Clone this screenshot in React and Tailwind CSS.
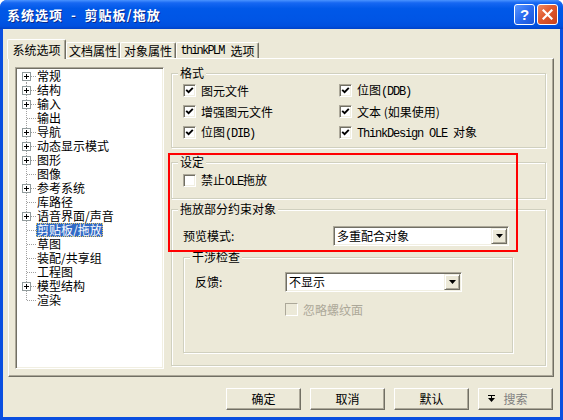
import React from 'react';

const M = ({ children }) => (
  <span className="font-['Liberation_Mono',monospace] tracking-[-1.2px] whitespace-pre">{children}</span>
);

function Check({ checked, disabled }) {
  return (
    <span
      className={
        disabled
          ? 'w-[13px] h-[13px] shrink-0 border border-t-[#aca899] border-l-[#aca899] border-b-white border-r-white bg-[#ece9d8]'
          : 'w-[13px] h-[13px] shrink-0 border border-t-[#aca899] border-l-[#aca899] border-b-white border-r-white bg-white shadow-[inset_1px_1px_0_#716f64,inset_-1px_-1px_0_#f1efe2] flex items-center justify-center'
      }
    >
      {checked && (
        <svg width="9" height="9" viewBox="0 0 9 9">
          <path d="M1.2 3.8 L3.6 6.2 L7.8 1.8" stroke="#000" strokeWidth="1.9" fill="none" />
        </svg>
      )}
    </span>
  );
}

function CheckRow({ checked, disabled, children }) {
  return (
    <div className="h-[21px] flex items-center gap-[5px]">
      <Check checked={checked} disabled={disabled} />
      <span className={disabled ? 'leading-[14px] text-[#aca899]' : 'leading-[14px]'}>{children}</span>
    </div>
  );
}

function Group({ label, className, children }) {
  return (
    <div className={`relative border border-[#d0d0bf] shadow-[inset_1px_1px_0_#fff,1px_1px_0_#fff] ${className}`}>
      <span className="absolute -top-[8px] left-[6px] px-[2px] bg-[#ece9d8] leading-[14px] whitespace-nowrap">
        {label}
      </span>
      {children}
    </div>
  );
}

function Combo({ value, className }) {
  return (
    <div
      className={`h-[20px] p-[1px] bg-white border border-t-[#aca899] border-l-[#aca899] border-b-white border-r-white shadow-[inset_1px_1px_0_#716f64,inset_-1px_-1px_0_#f1efe2] flex items-center ${className}`}
    >
      <span className="flex-1 pl-[2px] leading-[14px]">{value}</span>
      <span className="w-[16px] h-[16px] bg-[#ece9d8] border border-t-[#f1efe2] border-l-[#f1efe2] border-r-[#716f64] border-b-[#716f64] shadow-[inset_1px_1px_0_#fff,inset_-1px_-1px_0_#aca899] flex items-center justify-center">
        <svg width="7" height="4" viewBox="0 0 7 4">
          <path d="M0 0 H7 L3.5 4 Z" fill="#000" />
        </svg>
      </span>
    </div>
  );
}

const tree = [
  ['常规', true],
  ['结构', true],
  ['输入', true],
  ['输出', false],
  ['导航', true],
  ['动态显示模式', true],
  ['图形', true],
  ['图像', false],
  ['参考系统', true],
  ['库路径', false],
  ['语音界面/声音', true],
  ['剪贴板/拖放', false, true],
  ['草图', false],
  ['装配/共享组', false],
  ['工程图', false],
  ['模型结构', true],
  ['渲染', false],
];

function TreeGlyph({ box, first, last }) {
  return (
    <svg width="19" height="14" className="shrink-0" shapeRendering="crispEdges">
      <line x1="9.5" y1={first ? 7 : 0} x2="9.5" y2={last ? 8 : 14} stroke="#a0a0a0" strokeDasharray="1 1" />
      <line x1={box ? 14 : 10} y1="7.5" x2="19" y2="7.5" stroke="#a0a0a0" strokeDasharray="1 1" />
      {box && (
        <>
          <rect x="5.5" y="3.5" width="8" height="8" fill="#fff" stroke="#919b9c" />
          <line x1="7" y1="7.5" x2="12" y2="7.5" stroke="#000" />
          <line x1="9.5" y1="5" x2="9.5" y2="10" stroke="#000" />
        </>
      )}
    </svg>
  );
}

function Button({ children }) {
  return (
    <div className="w-[75px] h-[22px] bg-[#ece9d8] border border-t-white border-l-white border-r-[#716f64] border-b-[#716f64] shadow-[inset_-1px_-1px_0_#aca899] flex items-center justify-center leading-[14px]">
      {children}
    </div>
  );
}

export default function App() {
  return (
    <div className="relative w-[563px] h-[420px] flex flex-col bg-[#0a4fe0] rounded-t-[7px] overflow-hidden font-['Noto_Sans_CJK_SC',sans-serif] text-[12px] text-black">
      {/* Title bar */}
      <div className="h-[29px] shrink-0 flex items-center pl-[7px] pr-[5px] bg-[linear-gradient(to_bottom,#4a93ff_0%,#1667f2_10%,#0058e8_30%,#0055e5_70%,#0050df_90%,#0042c8_100%)]">
        <span className="text-white font-bold text-[13px] tracking-[1px] leading-none whitespace-pre [text-shadow:1px_1px_0_#0b2a8c]">
          {'系统选项  -  剪贴板/拖放'}
        </span>
        <div className="ml-auto flex gap-[2px]">
          <div className="w-[21px] h-[21px] rounded-[3px] border border-white bg-[linear-gradient(135deg,#5b97ff_0%,#2a6cf0_50%,#1a55d8_100%)] flex items-center justify-center">
            <span className="text-white font-bold text-[15px] leading-none font-['Liberation_Sans',sans-serif]">?</span>
          </div>
          <div className="w-[21px] h-[21px] rounded-[3px] border border-white bg-[linear-gradient(135deg,#f08a62_0%,#e0592e_45%,#c9411c_100%)] flex items-center justify-center">
            <svg width="11" height="11" viewBox="0 0 11 11">
              <path d="M1.5 1.5 L9.5 9.5 M9.5 1.5 L1.5 9.5" stroke="#fff" strokeWidth="2.2" strokeLinecap="square" />
            </svg>
          </div>
        </div>
      </div>

      {/* Body */}
      <div className="flex-1 mx-[3px] mb-[3px] bg-[#ece9d8] flex flex-col">
        {/* Tabs */}
        <div className="mt-[10px] ml-[4px] h-[19px] flex items-end">
          <div className="relative z-10 -mb-[1px] w-[59px] h-[20px] bg-[#ece9d8] border-t border-l border-white border-r border-r-[#716f64] rounded-t-[2px] shadow-[inset_-1px_0_0_#aca899] flex items-center justify-center leading-[14px]">
            系统选项
          </div>
          <div className="w-[54px] h-[16px] border-t border-l border-white border-r border-r-[#716f64] rounded-t-[2px] shadow-[inset_-1px_0_0_#aca899] flex items-center justify-center leading-[14px]">
            文档属性
          </div>
          <div className="w-[56px] h-[16px] border-t border-l border-white border-r border-r-[#716f64] rounded-t-[2px] shadow-[inset_-1px_0_0_#aca899] flex items-center justify-center leading-[14px]">
            对象属性
          </div>
          <div className="w-[83px] h-[16px] border-t border-l border-white border-r border-r-[#716f64] rounded-t-[2px] shadow-[inset_-1px_0_0_#aca899] flex items-center justify-center leading-[14px]">
            <span className="font-['Liberation_Mono',monospace] tracking-[-1.8px]">thinkPLM</span>
            <span className="ml-[7px]">选项</span>
          </div>
        </div>

        {/* Panel */}
        <div className="ml-[5px] w-[546px] h-[319px] border border-t-white border-l-white border-r-[#716f64] border-b-[#716f64] shadow-[inset_-1px_-1px_0_#aca899] flex items-start">
          {/* Tree */}
          <div className="mt-[8px] ml-[6px] w-[149px] h-[302px] p-[1px] bg-white border border-t-[#aca899] border-l-[#aca899] border-b-white border-r-white shadow-[inset_1px_1px_0_#716f64,inset_-1px_-1px_0_#f1efe2] flex flex-col">
            {tree.map(([name, box, sel], i) => (
              <div key={name} className="h-[14px] flex items-stretch">
                <TreeGlyph box={box} first={i === 0} last={i === tree.length - 1} />
                <span
                  className={
                    sel
                      ? 'px-[1px] leading-[14px] whitespace-nowrap bg-[#316ac5] text-white outline outline-1 outline-dotted outline-[#e8c86a] -outline-offset-1'
                      : 'px-[1px] leading-[14px] whitespace-nowrap'
                  }
                >
                  {name}
                </span>
              </div>
            ))}
          </div>

          {/* Right column */}
          <div className="ml-[7px] mt-[14px] w-[375px] flex flex-col">
            <Group label="格式" className="h-[75px]">
              <div className="pt-[6px] pl-[11px] grid grid-cols-[156px_1fr]">
                <CheckRow checked>图元文件</CheckRow>
                <CheckRow checked>位图<M>(DDB)</M></CheckRow>
                <CheckRow checked>增强图元文件</CheckRow>
                <CheckRow checked>文本 (如果使用)</CheckRow>
                <CheckRow checked>位图<M>(DIB)</M></CheckRow>
                <CheckRow checked><M>{'ThinkDesign OLE '}</M>对象</CheckRow>
              </div>
            </Group>

            <Group label="设定" className="mt-[14px] h-[37px]">
              <div className="pt-[7px] pl-[11px]">
                <CheckRow>禁止<M>OLE</M>拖放</CheckRow>
              </div>
            </Group>

            <Group label="拖放部分约束对象" className="mt-[10px] h-[157px]">
              <div className="pt-[16px] pl-[11px] flex items-center h-[36px]">
                <span className="w-[150px] leading-[14px]">预览模式:</span>
                <Combo value="多重配合对象" className="w-[176px]" />
              </div>
              <Group label="干涉检查" className="mt-[11px] ml-[11px] w-[330px] h-[96px]">
                <div className="pt-[14px] pl-[11px] flex items-center h-[34px]">
                  <span className="w-[90px] leading-[14px]">反馈:</span>
                  <Combo value="不显示" className="w-[177px]" />
                </div>
                <div className="mt-[7px] pl-[101px]">
                  <CheckRow disabled>忽略螺纹面</CheckRow>
                </div>
              </Group>
            </Group>
          </div>
        </div>

        {/* Buttons */}
        <div className="mt-[11px] pr-[7px] flex justify-end gap-[9px]">
          <Button>确定</Button>
          <Button>取消</Button>
          <Button>默认</Button>
          <div className="w-[75px] h-[22px] bg-[#ece9d8] border border-t-white border-l-white border-r-[#716f64] border-b-[#716f64] shadow-[inset_-1px_-1px_0_#aca899] flex items-center pl-[9px] leading-[14px]">
            <svg width="7" height="8" viewBox="0 0 7 8" className="shrink-0">
              <rect x="0" y="0" width="7" height="1" fill="#000" />
              <rect x="3" y="1" width="1" height="2" fill="#000" />
              <path d="M0 3 H7 L3.5 7 Z" fill="#000" />
            </svg>
            <span className="flex-1 mr-[16px] text-center text-[#808080]">搜索</span>
          </div>
        </div>
      </div>

      {/* Red annotation rectangle */}
      <div className="absolute left-[168px] top-[153px] w-[350px] h-[99px] border-2 border-[#ff0000] pointer-events-none" />
    </div>
  );
}
